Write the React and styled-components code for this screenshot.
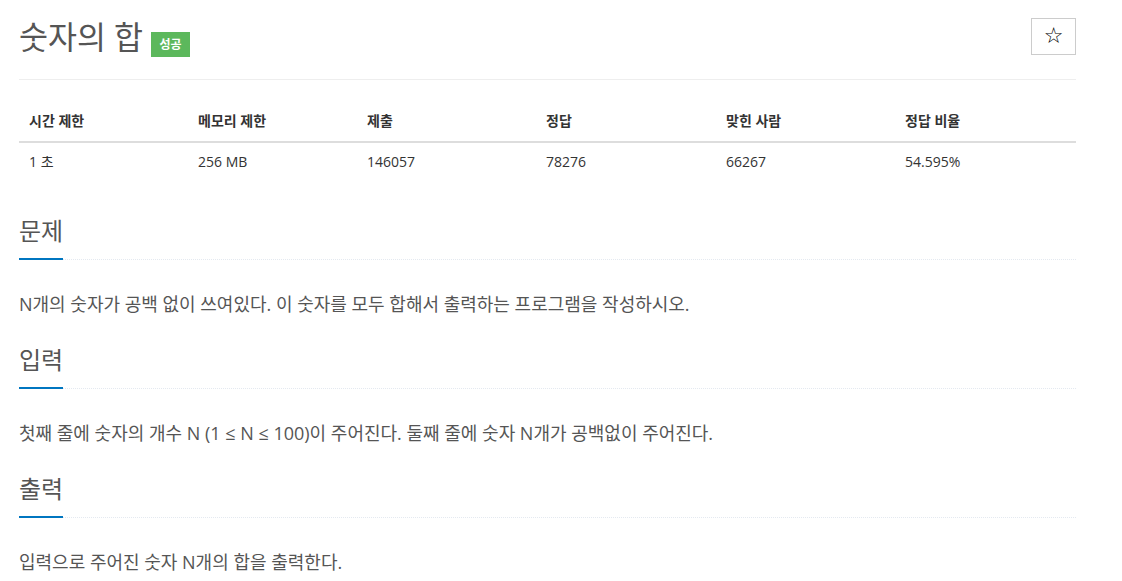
import React from 'react';
import styled, { createGlobalStyle } from 'styled-components';

const GlobalStyle = createGlobalStyle`
  html, body {
    margin: 0;
    padding: 0;
    background: #fff;
  }
  body {
    font-family: 'Open Sans', 'Noto Sans CJK KR', sans-serif;
    color: #555;
  }
`;

const stats = [
  { label: '시간 제한', value: '1 초', width: 169 },
  { label: '메모리 제한', value: '256 MB', width: 169 },
  { label: '제출', value: '146057', width: 179 },
  { label: '정답', value: '78276', width: 180 },
  { label: '맞힌 사람', value: '66267', width: 179 },
  { label: '정답 비율', value: '54.595%', width: 181 },
];

const sections = [
  {
    title: '문제',
    body: 'N개의 숫자가 공백 없이 쓰여있다. 이 숫자를 모두 합해서 출력하는 프로그램을 작성하시오.',
  },
  {
    title: '입력',
    body: '첫째 줄에 숫자의 개수 N (1 ≤ N ≤ 100)이 주어진다. 둘째 줄에 숫자 N개가 공백없이 주어진다.',
  },
  {
    title: '출력',
    body: '입력으로 주어진 숫자 N개의 합을 출력한다.',
  },
];

const App = () => {
  return (
    <>
      <GlobalStyle />
      <Page>
        <TitleBar>
          <TitleGroup>
            <Title>숫자의 합</Title>
            <Badge>성공</Badge>
          </TitleGroup>
          <StarButton type="button">☆</StarButton>
        </TitleBar>

        <StatsTable>
          <colgroup>
            {stats.map(s => (
              <col key={s.label} style={{ width: s.width }} />
            ))}
          </colgroup>
          <thead>
            <tr>
              {stats.map(s => (
                <HeadCell key={s.label}>{s.label}</HeadCell>
              ))}
            </tr>
          </thead>
          <tbody>
            <tr>
              {stats.map(s => (
                <Cell key={s.label}>{s.value}</Cell>
              ))}
            </tr>
          </tbody>
        </StatsTable>

        {sections.map(sec => (
          <Section key={sec.title}>
            <Headline>
              <HeadlineTitle>{sec.title}</HeadlineTitle>
            </Headline>
            <Paragraph>{sec.body}</Paragraph>
          </Section>
        ))}
      </Page>
    </>
  );
};

export default App;

const Page = styled.div`
  width: 1057px;
  padding: 0 0 0 19px;
  box-sizing: content-box;
`;

const TitleBar = styled.div`
  display: flex;
  justify-content: space-between;
  align-items: flex-start;
  padding-top: 18px;
  height: 61px;
  border-bottom: 1px solid #eee;
`;

const TitleGroup = styled.div`
  display: flex;
  align-items: center;
  gap: 8px;
  height: 37px;
`;

const Title = styled.h1`
  margin: 0;
  font-size: 31.5px;
  font-weight: 400;
  line-height: 37px;
  color: #555;
`;

const Badge = styled.span`
  display: inline-flex;
  align-items: center;
  justify-content: center;
  width: 39px;
  height: 25px;
  margin-top: 15px;
  background: #5cb85c;
  color: #fff;
  font-size: 12px;
  font-weight: 700;
`;

const StarButton = styled.button`
  width: 45px;
  height: 37px;
  padding: 0 0 2px;
  border: 1px solid #ccc;
  background: #fff;
  color: #000;
  font-family: 'DejaVu Sans', sans-serif;
  font-size: 22px;
  line-height: 1;
  cursor: pointer;
`;

const StatsTable = styled.table`
  width: 100%;
  margin-top: 23px;
  table-layout: fixed;
  border-collapse: collapse;
  font-size: 14px;
  color: #333;
`;

const HeadCell = styled.th`
  height: 34px;
  padding: 0 10px 4px;
  text-align: left;
  font-weight: 700;
  border-bottom: 2px solid #ddd;
`;

const Cell = styled.td`
  height: 36px;
  padding: 0 10px 2px;
  text-align: left;
`;

const Section = styled.section`
  margin-top: 24px;
  &:first-of-type {
    margin-top: 33px;
  }
`;

const Headline = styled.div`
  display: flex;
  border-bottom: 1px dotted #e4e9f0;
`;

const HeadlineTitle = styled.h2`
  margin: 0 0 -1px;
  padding-bottom: 10px;
  font-size: 24px;
  font-weight: 400;
  line-height: 34px;
  color: #555;
  border-bottom: 2px solid #0076c0;
`;

const Paragraph = styled.p`
  margin: 29px 0 0;
  font-size: 18px;
  line-height: 30px;
  color: #555;
`;
